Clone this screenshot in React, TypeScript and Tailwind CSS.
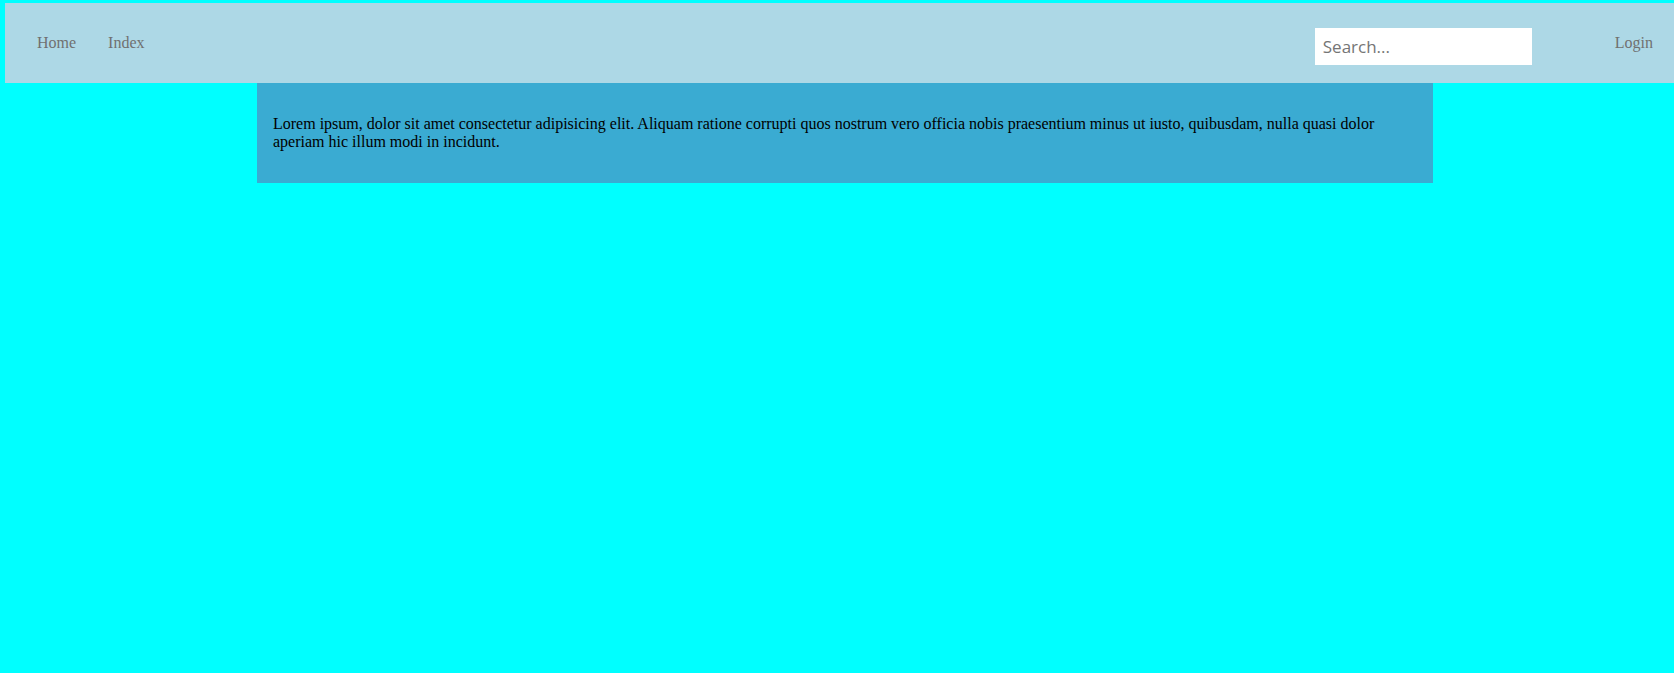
export default function App() {
  const links = ['Home', 'Index'];

  return (
    <div className="min-h-[673px] bg-[#00ffff] pt-[3px] font-['Liberation_Serif',serif] text-[16px] leading-[normal]">
      {/* top nav */}
      <nav className="ml-[5px] flex h-[80px] items-center bg-[#add8e6] pl-[32px] pr-[21px]">
        <ul className="flex gap-[32px]">
          {links.map((l) => (
            <li key={l} className="text-[#707070]">
              {l}
            </li>
          ))}
        </ul>
        <input
          type="text"
          placeholder="Search..."
          className="ml-auto mt-[7px] h-[37px] w-[217px] bg-white px-[8px] font-['Open_Sans',sans-serif] text-[17px] text-black outline-none placeholder:text-[#757575]"
        />
        <span className="ml-[83px] text-[#707070]">Login</span>
      </nav>

      {/* content */}
      <section className="ml-[257px] w-[1176px] bg-[#3aabd2] p-4">
        <p className="my-4 text-black">
          Lorem ipsum, dolor sit amet consectetur adipisicing elit. Aliquam ratione corrupti quos nostrum vero
          officia nobis praesentium minus ut iusto, quibusdam, nulla quasi dolor aperiam hic illum modi in incidunt.
        </p>
      </section>
    </div>
  );
}
